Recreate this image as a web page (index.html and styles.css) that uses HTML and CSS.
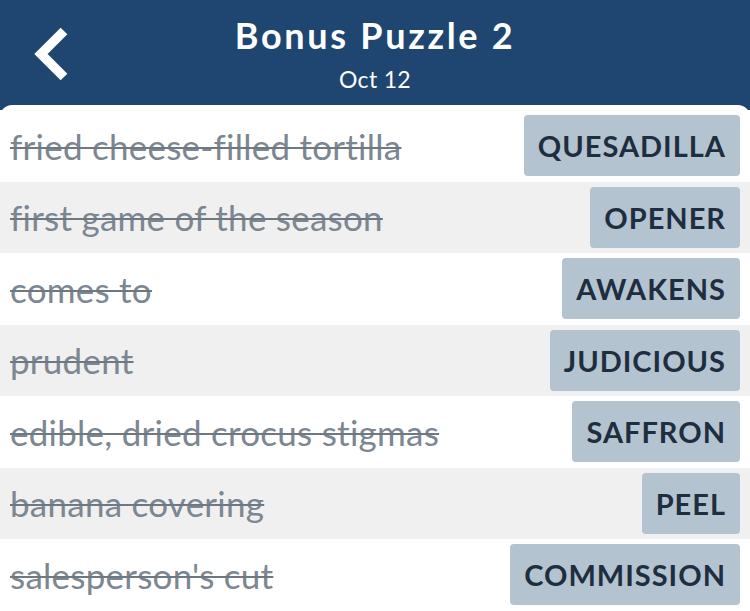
FILE: index.html
```html
<!DOCTYPE html>
<html lang="en">
<head>
<meta charset="utf-8">
<title>Bonus Puzzle 2</title>
<link rel="stylesheet" href="styles.css">
</head>
<body>
<div class="app">
  <header class="header">
    <button class="back" aria-label="Back">
      <svg width="40" height="60" viewBox="0 0 40 60"><polyline points="31,6 8,29 31,52" fill="none" stroke="#fff" stroke-width="9.5" stroke-linecap="butt" stroke-linejoin="miter"/></svg>
    </button>
    <div class="titles">
      <h1 class="title">Bonus Puzzle 2</h1>
      <div class="date">Oct 12</div>
    </div>
  </header>
  <main class="list">
    <div class="row"><span class="clue">fried cheese-filled tortilla</span><span class="answer">QUESADILLA</span></div>
    <div class="row alt"><span class="clue">first game of the season</span><span class="answer">OPENER</span></div>
    <div class="row"><span class="clue">comes to</span><span class="answer">AWAKENS</span></div>
    <div class="row alt"><span class="clue">prudent</span><span class="answer">JUDICIOUS</span></div>
    <div class="row"><span class="clue">edible, dried crocus stigmas</span><span class="answer">SAFFRON</span></div>
    <div class="row alt"><span class="clue">banana covering</span><span class="answer">PEEL</span></div>
    <div class="row"><span class="clue">salesperson's cut</span><span class="answer">COMMISSION</span></div>
  </main>
</div>
</body>
</html>
```

FILE: styles.css
```css
* { box-sizing: border-box; }
html, body { margin: 0; padding: 0; }
body {
  width: 750px;
  height: 611px;
  overflow: hidden;
  background: #1f4670;
  font-family: Lato, "Open Sans", sans-serif;
}
.app { display: flex; flex-direction: column; height: 611px; }
.header {
  height: 105px;
  flex: none;
  position: relative;
  display: flex;
  justify-content: center;
  background: #1f4670;
  color: #fff;
}
.back {
  position: absolute;
  left: 33px;
  top: 25px;
  width: 40px;
  height: 60px;
  padding: 0;
  border: 0;
  background: none;
}
.back svg { display: block; }
.titles { display: flex; flex-direction: column; align-items: center; padding-top: 13px; }
.title {
  margin: 0;
  font-size: 36px;
  font-weight: 700;
  line-height: 44px;
  letter-spacing: 2.7px;
}
.date {
  font-size: 23px;
  line-height: 28px;
  margin-top: 8px;
  letter-spacing: 0.3px;
}
.list {
  flex: 1;
  background: #fff;
  border-radius: 12px 12px 0 0;
  padding-top: 5px;
  display: flex;
  flex-direction: column;
}
.row {
  height: 71.5px;
  display: flex;
  align-items: center;
  justify-content: space-between;
  padding: 0 10px;
  background: #fff;
}
.row.alt { background: #f0f0f0; }
.clue {
  font-size: 35px;
  letter-spacing: 0.25px;
  color: #7c8791;
  text-decoration: line-through;
  text-decoration-thickness: 2px;
  text-decoration-color: #6e7881;
  white-space: nowrap;
}
.answer {
  height: 61px;
  display: flex;
  align-items: center;
  padding: 0 14px;
  background: #b3c3d0;
  border-radius: 4px;
  color: #1e2e3e;
  font-size: 29px;
  font-weight: 700;
  letter-spacing: 1px;
}
```
